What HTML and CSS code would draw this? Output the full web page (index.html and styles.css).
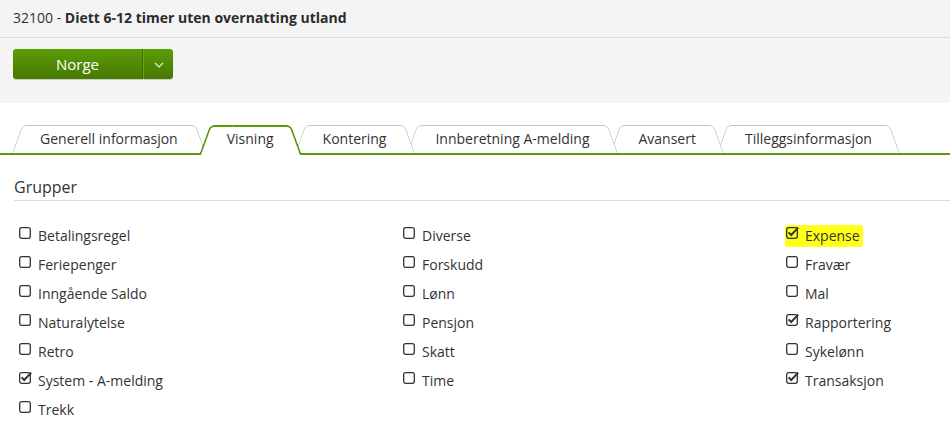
FILE: index.html
```html
<!DOCTYPE html>
<html lang="no">
<head>
<meta charset="utf-8">
<title>32100 - Diett 6-12 timer uten overnatting utland</title>
<link rel="stylesheet" href="styles.css">
</head>
<body>
<header class="page-head">
  <div class="title-bar"><span class="code">32100 - </span><strong>Diett 6-12 timer uten overnatting utland</strong></div>
  <div class="actions">
    <div class="split-btn">
      <button class="btn-main" type="button">Norge</button>
      <button class="btn-caret" type="button" aria-label="Flere">
        <svg width="10" height="6" viewBox="0 0 10 6"><path d="M1 1 L5 5 L9 1" fill="none" stroke="#e8f2da" stroke-width="1.2"/></svg>
      </button>
    </div>
  </div>
</header>

<nav class="tabs">
  <div class="tab t1">Generell informasjon</div>
  <div class="tab t2 active">Visning</div>
  <div class="tab t3">Kontering</div>
  <div class="tab t4">Innberetning A-melding</div>
  <div class="tab t5">Avansert</div>
  <div class="tab t6">Tilleggsinformasjon</div>
</nav>

<section class="groups">
  <h2 class="groups-title">Grupper</h2>
  <div class="grid">
    <div class="col">
      <label class="item"><svg class="cb" viewBox="0 0 14 13"><rect x="0.7" y="1.7" width="10.6" height="10.6" rx="2" fill="none" stroke="#333" stroke-width="1.3"/></svg>Betalingsregel</label>
      <label class="item"><svg class="cb" viewBox="0 0 14 13"><rect x="0.7" y="1.7" width="10.6" height="10.6" rx="2" fill="none" stroke="#333" stroke-width="1.3"/></svg>Feriepenger</label>
      <label class="item"><svg class="cb" viewBox="0 0 14 13"><rect x="0.7" y="1.7" width="10.6" height="10.6" rx="2" fill="none" stroke="#333" stroke-width="1.3"/></svg>Inngående Saldo</label>
      <label class="item"><svg class="cb" viewBox="0 0 14 13"><rect x="0.7" y="1.7" width="10.6" height="10.6" rx="2" fill="none" stroke="#333" stroke-width="1.3"/></svg>Naturalytelse</label>
      <label class="item"><svg class="cb" viewBox="0 0 14 13"><rect x="0.7" y="1.7" width="10.6" height="10.6" rx="2" fill="none" stroke="#333" stroke-width="1.3"/></svg>Retro</label>
      <label class="item"><svg class="cb" viewBox="0 0 14 13"><rect x="0.7" y="1.7" width="10.6" height="10.6" rx="2" fill="none" stroke="#333" stroke-width="1.3"/><path d="M2.6 6.4 L5.2 9 L12.2 1.6" fill="none" stroke="#333" stroke-width="2"/></svg>System - A-melding</label>
      <label class="item"><svg class="cb" viewBox="0 0 14 13"><rect x="0.7" y="1.7" width="10.6" height="10.6" rx="2" fill="none" stroke="#333" stroke-width="1.3"/></svg>Trekk</label>
    </div>
    <div class="col">
      <label class="item"><svg class="cb" viewBox="0 0 14 13"><rect x="0.7" y="1.7" width="10.6" height="10.6" rx="2" fill="none" stroke="#333" stroke-width="1.3"/></svg>Diverse</label>
      <label class="item"><svg class="cb" viewBox="0 0 14 13"><rect x="0.7" y="1.7" width="10.6" height="10.6" rx="2" fill="none" stroke="#333" stroke-width="1.3"/></svg>Forskudd</label>
      <label class="item"><svg class="cb" viewBox="0 0 14 13"><rect x="0.7" y="1.7" width="10.6" height="10.6" rx="2" fill="none" stroke="#333" stroke-width="1.3"/></svg>Lønn</label>
      <label class="item"><svg class="cb" viewBox="0 0 14 13"><rect x="0.7" y="1.7" width="10.6" height="10.6" rx="2" fill="none" stroke="#333" stroke-width="1.3"/></svg>Pensjon</label>
      <label class="item"><svg class="cb" viewBox="0 0 14 13"><rect x="0.7" y="1.7" width="10.6" height="10.6" rx="2" fill="none" stroke="#333" stroke-width="1.3"/></svg>Skatt</label>
      <label class="item"><svg class="cb" viewBox="0 0 14 13"><rect x="0.7" y="1.7" width="10.6" height="10.6" rx="2" fill="none" stroke="#333" stroke-width="1.3"/></svg>Time</label>
    </div>
    <div class="col">
      <label class="item"><span class="hl"><svg class="cb" viewBox="0 0 14 13"><rect x="0.7" y="1.7" width="10.6" height="10.6" rx="2" fill="none" stroke="#333" stroke-width="1.3"/><path d="M2.6 6.4 L5.2 9 L12.2 1.6" fill="none" stroke="#333" stroke-width="2"/></svg>Expense</span></label>
      <label class="item"><svg class="cb" viewBox="0 0 14 13"><rect x="0.7" y="1.7" width="10.6" height="10.6" rx="2" fill="none" stroke="#333" stroke-width="1.3"/></svg>Fravær</label>
      <label class="item"><svg class="cb" viewBox="0 0 14 13"><rect x="0.7" y="1.7" width="10.6" height="10.6" rx="2" fill="none" stroke="#333" stroke-width="1.3"/></svg>Mal</label>
      <label class="item"><svg class="cb" viewBox="0 0 14 13"><rect x="0.7" y="1.7" width="10.6" height="10.6" rx="2" fill="none" stroke="#333" stroke-width="1.3"/><path d="M2.6 6.4 L5.2 9 L12.2 1.6" fill="none" stroke="#333" stroke-width="2"/></svg>Rapportering</label>
      <label class="item"><svg class="cb" viewBox="0 0 14 13"><rect x="0.7" y="1.7" width="10.6" height="10.6" rx="2" fill="none" stroke="#333" stroke-width="1.3"/></svg>Sykelønn</label>
      <label class="item"><svg class="cb" viewBox="0 0 14 13"><rect x="0.7" y="1.7" width="10.6" height="10.6" rx="2" fill="none" stroke="#333" stroke-width="1.3"/><path d="M2.6 6.4 L5.2 9 L12.2 1.6" fill="none" stroke="#333" stroke-width="2"/></svg>Transaksjon</label>
    </div>
  </div>
</section>
</body>
</html>
```

FILE: styles.css
```css
* { box-sizing: border-box; }

html, body {
  margin: 0;
  padding: 0;
  background: #ffffff;
  font-family: "Open Sans", "Liberation Sans", sans-serif;
  font-size: 14px;
  color: #333333;
  overflow: hidden;
}

.page-head {
  background: #f4f4f4;
}

.title-bar {
  height: 38px;
  line-height: 36px;
  padding-left: 13px;
  border-bottom: 1px solid #dadada;
  font-size: 14px;
  color: #333;
}

.title-bar .code {
  font-weight: 400;
}

.title-bar strong {
  font-weight: 700;
  color: #2c2c2c;
}

.actions {
  height: 65px;
  padding: 11px 13px 0;
}

.split-btn {
  display: inline-flex;
  height: 30px;
  border-radius: 3px;
  overflow: hidden;
  background: linear-gradient(#5c9c08, #467a00);
  box-shadow: 0 1px 1px rgba(0,0,0,0.18);
}

.split-btn button {
  border: 0;
  margin: 0;
  background: transparent;
  color: #ffffff;
  font-family: inherit;
  cursor: pointer;
}

.btn-main {
  width: 130px;
  font-size: 15px;
  padding: 0;
  line-height: 30px;
  border-right: 1px solid #3f6e00 !important;
}

.btn-caret {
  width: 30px;
  display: flex;
  align-items: center;
  justify-content: center;
  padding: 2px 0 0;
  border-left: 1px solid #6aa61c !important;
}

/* Tabs */
.tabs {
  display: flex;
  margin-top: 22px;
  padding-left: 12px;
  height: 30px;
  border-bottom: 2px solid #5f9a0e;
}

.tab {
  position: relative;
  height: 28px;
  line-height: 27px;
  padding: 0 28px;
  margin-right: -7px;
  font-size: 14px;
  color: #333;
  white-space: nowrap;
  cursor: pointer;
}

.tab::before,
.tab::after {
  content: "";
  position: absolute;
  top: 0;
  bottom: 0;
  width: 55%;
  background: #ffffff;
  border-top: 1px solid #c4c4c4;
  z-index: -1;
  transform-origin: bottom;
}

.tab::before {
  left: 0;
  border-left: 1px solid #c4c4c4;
  border-top-left-radius: 5px;
  transform: skewX(-20deg);
}

.tab::after {
  right: 0;
  border-right: 1px solid #c4c4c4;
  border-top-right-radius: 5px;
  transform: skewX(20deg);
}

.t1 { z-index: 6; }
.t3 { z-index: 5; }
.t4 { z-index: 4; }
.t5 { z-index: 3; }
.t6 { z-index: 2; }

.tab.active {
  z-index: 10;
  height: 30px;
  margin-bottom: -2px;
}

.tab.active::before,
.tab.active::after {
  border-color: #5f9a0e;
  border-top-width: 2px;
}

.tab.active::before { border-left-width: 2px; }
.tab.active::after { border-right-width: 2px; }

/* Groups */
.groups {
  padding-left: 14px;
}

.groups-title {
  margin: 21px 0 0;
  height: 25px;
  font-size: 16px;
  font-weight: 400;
  line-height: 22px;
  color: #333;
  border-bottom: 1px solid #dcdcdc;
}

.grid {
  display: grid;
  grid-template-columns: 384px 383px 1fr;
  margin-top: 20px;
  margin-left: 5px;
}

.col {
  display: flex;
  flex-direction: column;
}

.item {
  display: flex;
  align-items: center;
  height: 29px;
  font-size: 14px;
  color: #333;
  cursor: pointer;
}

.cb {
  width: 14px;
  height: 13px;
  flex: none;
  margin-right: 5px;
  margin-bottom: 7px;
}

.hl {
  display: inline-flex;
  align-items: center;
  height: 22px;
  margin-left: -1px;
  padding: 0 3px 0 1px;
  background: #ffff1a;
  border-radius: 3px;
}
```
